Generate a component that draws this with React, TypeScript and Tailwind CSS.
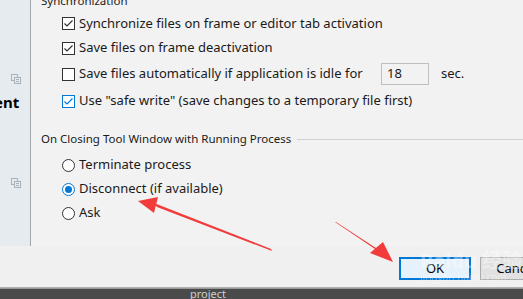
import React from 'react'

const font = { fontFamily: '"Noto Sans", "Noto Sans CJK SC", sans-serif' }

function Check({ checked, focus }: { checked?: boolean; focus?: boolean }) {
  const c = focus ? '#0078d7' : '#333333'
  return (
    <span
      className={`flex h-[13px] w-[13px] shrink-0 items-center justify-center border bg-white ${
        focus ? 'border-[#0078d7]' : 'border-[#333333]'
      }`}
    >
      {checked && (
        <svg width="11" height="11" viewBox="0 0 11 11" fill="none" stroke={c} strokeWidth="1.2">
          <polyline points="1.5 5.5 4 8 9.5 2.5" />
        </svg>
      )}
    </span>
  )
}

function Radio({ on }: { on?: boolean }) {
  return (
    <span
      className={`flex h-[13px] w-[13px] shrink-0 items-center justify-center rounded-full border bg-white ${
        on ? 'border-[#0078d7]' : 'border-[#333333]'
      }`}
    >
      {on && <span className="h-[7px] w-[7px] rounded-full bg-[#0078d7]" />}
    </span>
  )
}

function CopyIcon() {
  return (
    <svg width="10" height="10" viewBox="0 0 10 10" fill="none" stroke="#a9b1ba" strokeWidth="1">
      <rect x="0.5" y="0.5" width="6" height="6" />
      <rect x="3.5" y="3.5" width="6" height="6" fill="#e6ebf0" />
      <line x1="5" y1="5.5" x2="8" y2="5.5" />
      <line x1="5" y1="7.5" x2="8" y2="7.5" />
    </svg>
  )
}

export default function App() {
  return (
    <div className="relative flex h-[299px] w-[523px] flex-col overflow-hidden bg-[#f0f0f0] text-[13px] text-[#1a1a1a]" style={font}>
      <div className="flex h-[246px] shrink-0">
        {/* left nav strip */}
        <div className="flex w-[31px] shrink-0 flex-col border-r border-[#a6a6a6] bg-[#e6ebf0]">
          <div className="ml-[11px] mt-[74px]"><CopyIcon /></div>
          <div className="-ml-[6px] mt-[9px] text-[15px] font-bold leading-[18px] text-black">ent</div>
          <div className="ml-[11px] mt-[67px]"><CopyIcon /></div>
        </div>

        {/* settings */}
        <div className="flex flex-1 flex-col bg-[#f2f2f2] pl-[10px]">
          <div className="-mt-[10px] h-[21px] text-[11.5px] leading-[21px]">Synchronization</div>
          <div className="flex flex-col pl-[21px]">
            <div className="flex h-[25px] items-center gap-[4px]">
              <Check checked />
              <span>Synchronize files on frame or editor tab activation</span>
            </div>
            <div className="flex h-[24px] items-center gap-[4px]">
              <Check checked />
              <span>Save files on frame deactivation</span>
            </div>
            <div className="flex h-[28px] items-center gap-[4px]">
              <Check />
              <span className="w-[298px]">Save files automatically if application is idle for</span>
              <div className="flex h-[22px] w-[48px] items-center border border-[#bfbfbf] pl-[5px]">18</div>
              <span className="ml-[8px]">sec.</span>
            </div>
            <div className="flex h-[26px] items-center gap-[4px]">
              <Check checked focus />
              <span>Use "safe write" (save changes to a temporary file first)</span>
            </div>
          </div>

          <div className="mt-[16px] flex h-[18px] items-center gap-[6px]">
            <span className="text-[11.5px]">On Closing Tool Window with Running Process</span>
            <div className="h-px flex-1 bg-[#d0d0d0]" />
          </div>
          <div className="mt-[5px] flex flex-col pl-[21px]">
            <div className="flex h-[24px] items-center gap-[4px]">
              <Radio />
              <span>Terminate process</span>
            </div>
            <div className="flex h-[24px] items-center gap-[4px]">
              <Radio on />
              <span>Disconnect (if available)</span>
            </div>
            <div className="flex h-[24px] items-center gap-[4px]">
              <Radio />
              <span>Ask</span>
            </div>
          </div>
        </div>
      </div>

      {/* dialog buttons */}
      <div className="flex h-[41px] shrink-0 items-start justify-end gap-[9px] pt-[11px]">
        <button className="flex h-[23px] w-[72px] items-center justify-center border-2 border-[#0078d7] bg-[#e5f1fb] text-black">
          OK
        </button>
        <button className="-mr-[30px] flex h-[23px] w-[73px] items-center justify-center border border-[#adadad] bg-[#e1e1e1] text-black">
          Cancel
        </button>
      </div>

      {/* window edge below */}
      <div className="h-px bg-[#3c3c3c]" />
      <div className="h-[5px] bg-gradient-to-b from-[#bdbdbd] to-[#8e8e8e]" />
      <div className="h-px bg-[#2a2a2a]" />
      <div className="flex flex-1 items-start bg-[#4a4a4a] pl-[190px] text-[11px] leading-[10px] text-[#cfcfcf]">project</div>

      {/* watermark */}
      <div className="pointer-events-none absolute left-[420px] top-[250px] flex flex-col items-start text-white/40">
        <span className="text-[20px] font-bold leading-[22px]">Baidu 经验</span>
        <span className="text-[10px] leading-[10px]">jingyan.baidu.com</span>
      </div>

      {/* red arrows */}
      <svg className="pointer-events-none absolute left-0 top-0" width="523" height="299" viewBox="0 0 523 299">
        <polygon points="138,201 158,197 154,213" fill="#f23c3c" />
        <polygon points="154,203 157,207 272,251 271,249" fill="#f23c3c" />
        <polygon points="393,262 370,253 383,242" fill="#f23c3c" />
        <polygon points="335,222 336,222 379,250 375,249" fill="#f23c3c" />
      </svg>
    </div>
  )
}
